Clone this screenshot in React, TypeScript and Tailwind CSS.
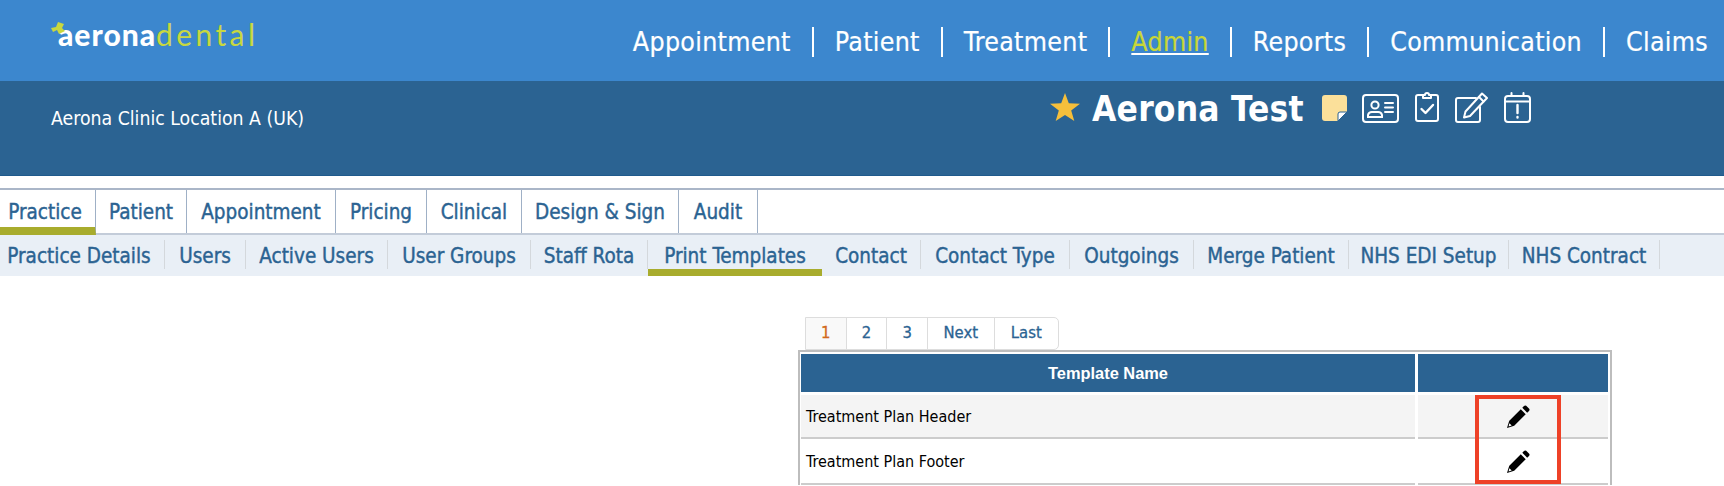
import React from "react";

const navItems = [
  { label: "Appointment", active: false },
  { label: "Patient", active: false },
  { label: "Treatment", active: false },
  { label: "Admin", active: true },
  { label: "Reports", active: false },
  { label: "Communication", active: false },
  { label: "Claims", active: false },
];

const mainTabs = [
  { label: "Practice", width: "w-[96px]" },
  { label: "Patient", width: "w-[91px]" },
  { label: "Appointment", width: "w-[149px]" },
  { label: "Pricing", width: "w-[91px]" },
  { label: "Clinical", width: "w-[95px]" },
  { label: "Design & Sign", width: "w-[157px]" },
  { label: "Audit", width: "w-[79px]" },
];

const subTabs = [
  { label: "Practice Details", width: "w-[165px]" },
  { label: "Users", width: "w-[81px]" },
  { label: "Active Users", width: "w-[142px]" },
  { label: "User Groups", width: "w-[143px]" },
  { label: "Staff Rota", width: "w-[117px]" },
  { label: "Print Templates", width: "w-[174px]" },
  { label: "Contact", width: "w-[99px]" },
  { label: "Contact Type", width: "w-[149px]" },
  { label: "Outgoings", width: "w-[124px]" },
  { label: "Merge Patient", width: "w-[155px]" },
  { label: "NHS EDI Setup", width: "w-[160px]" },
  { label: "NHS Contract", width: "w-[151px]" },
];

const pages = [
  { label: "1", width: "w-[41px]" },
  { label: "2", width: "w-[41px]" },
  { label: "3", width: "w-[41px]" },
  { label: "Next", width: "w-[67px]" },
  { label: "Last", width: "w-[64px]" },
];

const Logo = () => (
  <div className="relative flex h-[25px] items-end pl-[7px] text-[30px] leading-[25px] font-['Lato',sans-serif]">
    <svg className="absolute left-0 top-0" width="14" height="13" viewBox="0 0 14 13">
      <path d="M0 6 L5 5 L7 0 L13 2 L11 6 L14 9 L8 12 L6 8 L2 10 Z" fill="#c8d83f" />
    </svg>
    <span className="font-black tracking-[1px] text-white">aerona</span>
    <span className="font-normal tracking-[3.4px] text-[#c8d83f]">dental</span>
  </div>
);

const Star = () => (
  <svg width="30" height="28" viewBox="0 0 30 28">
    <path d="M15 0 L18.8 10.3 L30 10.7 L21.2 17.5 L24.3 28 L15 21.9 L5.7 28 L8.8 17.5 L0 10.7 L11.2 10.3 Z" fill="#f6bf3b" />
  </svg>
);

const Note = () => (
  <svg width="25" height="26" viewBox="0 0 25 26">
    <path d="M3 0 H22 A3 3 0 0 1 25 3 V17 L16 26 H3 A3 3 0 0 1 0 23 V3 A3 3 0 0 1 3 0 Z" fill="#fbe09a" />
    <path d="M25 17 H18 A2 2 0 0 0 16 19 V26 Z" fill="#fff" stroke="#2b6392" strokeWidth="1" />
  </svg>
);

const IdCard = () => (
  <svg width="37" height="29" viewBox="0 0 37 29" fill="none" stroke="#fff" strokeWidth="2" strokeLinecap="round">
    <rect x="1" y="1" width="35" height="27" rx="3" />
    <circle cx="13" cy="11" r="3.6" />
    <path d="M6 23 V21 A4 4 0 0 1 10 18 H16 A4 4 0 0 1 20 21 V23 Z" />
    <path d="M23 9 H31 M23 13.500 H31 M23 18 H31" />
  </svg>
);

const ClipboardCheck = () => (
  <svg width="24" height="32" viewBox="0 0 24 32" fill="none" stroke="#fff" strokeWidth="2" strokeLinecap="round" strokeLinejoin="round">
    <rect x="1" y="5" width="22" height="26" rx="2" />
    <path d="M8 8 V5 H10 A2 2 0 0 1 14 5 H16 V8 Z" fill="#2b6392" />
    <path d="M6.500 19 L10.500 23 L18 15" strokeWidth="2.400" />
  </svg>
);

const EditNote = () => (
  <svg width="33" height="31" viewBox="0 0 33 31" fill="none" stroke="#fff" strokeWidth="2" strokeLinecap="round" strokeLinejoin="round">
    <path d="M21 6 H3 A2 2 0 0 0 1 8 V28 A2 2 0 0 0 3 30 H23 A2 2 0 0 0 25 28 V15" />
    <path d="M27 1.500 L32 6 L15 24 L9 25.500 L10.500 19.500 Z" />
    <path d="M24 5 L28.500 9.500" />
  </svg>
);

const CalendarAlert = () => (
  <svg width="27" height="31" viewBox="0 0 27 31" fill="none" stroke="#fff" strokeWidth="2" strokeLinecap="round">
    <rect x="1" y="4" width="25" height="26" rx="3" />
    <path d="M1 9.500 H26 M7.500 1 V4 M19.500 1 V4" />
    <path d="M13.500 13 V21 M13.500 25 V25.600" strokeWidth="2.400" />
  </svg>
);

const Pencil = () => (
  <svg width="23" height="23" viewBox="0 0 23 23">
    <path d="M15.300 2.800 L17 1 Q18 0 19.200 0.800 L22.200 3.800 Q23 5 22 6 L20.200 7.700 Z" fill="#000" />
    <path d="M13.800 4.300 L18.700 9.200 L7.200 20.700 L0 23 L2.300 15.800 Z" fill="#000" />
    <path d="M2.400 18.300 L4.700 20.600 L1.600 21.400 Z" fill="#fff" />
  </svg>
);

export default function App() {
  return (
    <div className="h-[486px] w-[1724px] overflow-hidden bg-white font-['DejaVu_Sans_Condensed','DejaVu_Sans',sans-serif]">
      <header className="flex h-[81px] justify-between bg-[#3c87ce] pl-[51px]">
        <div className="pt-[22px]">
          <Logo />
        </div>
        <nav className="-mr-[5px] flex items-start pt-[27px]">
          {navItems.map((item, i) => (
            <a
              key={item.label}
              className={
                "flex h-[30px] items-center px-[21px] text-[26.5px] leading-none tracking-[0.3px] [-webkit-text-stroke:0.2px] " +
                (i < navItems.length - 1 ? "border-r-2 border-white " : "") +
                (item.active ? "text-[#c9d636] underline decoration-white" : "text-white")
              }
            >
              {item.label}
            </a>
          ))}
        </nav>
      </header>

      <section className="relative flex h-[95px] border-b border-[#1f5a8c] bg-[#2b6392] pl-[51px]">
        <div className="pt-[27px] text-[19.3px] leading-[22px] text-white">Aerona Clinic Location A (UK)</div>
        <div className="absolute left-[1050px] top-[9px] flex items-start">
          <div className="mt-[3px]">
            <Star />
          </div>
          <h1 className="-mt-[1px] ml-[12px] text-[35px] leading-[40px] font-bold tracking-[0.2px] text-white">Aerona Test</h1>
          <div className="ml-[18px] flex items-start">
            <div className="mt-[5px]">
              <Note />
            </div>
            <div className="ml-[15px] mt-[4px]">
              <IdCard />
            </div>
            <div className="ml-[16px]">
              <ClipboardCheck />
            </div>
            <div className="ml-[16px] mt-[2px]">
              <EditNote />
            </div>
            <div className="ml-[16px] mt-[2px]">
              <CalendarAlert />
            </div>
          </div>
        </div>
      </section>

      <nav className="mt-[12px] flex h-[47px] border-y-2 border-t-[#aab6c8] border-b-[#c3ccd9]">
        {mainTabs.map((tab, i) => (
          <a
            key={tab.label}
            className={
              "relative flex items-center justify-center border-r border-[#9fb0c6] pt-[2px] text-[20.5px] text-[#2b6392] [-webkit-text-stroke:0.4px_#2b6392] " +
              tab.width +
              (i === 0 ? " -mb-[2px] border-b-[8px] border-b-[#a8ac2d] pt-[8px] pr-[5px]" : "")
            }
          >
            {tab.label}
          </a>
        ))}
      </nav>

      <nav className="flex h-[41px] items-start bg-[#e9eff6] pt-[5px]">
        {subTabs.map((tab, i) => (
          <a
            key={tab.label}
            className={
              "flex items-center justify-center pt-[3px] text-[20.5px] text-[#2b6392] [-webkit-text-stroke:0.4px_#2b6392] " +
              tab.width +
              (tab.label === "Print Templates"
                ? " h-[36px] border-b-[7px] border-[#a8ac2d]"
                : " h-[29px] border-r border-[#d4d8dc]") +
              (i === 0 ? " pr-[6px]" : "")
            }
          >
            {tab.label}
          </a>
        ))}
      </nav>

      <main className="relative pl-[798px] pt-[41px]">
        <div className="ml-[7px] flex h-[33px] w-[254px] overflow-hidden rounded-tr-[5px] rounded-br-[5px] border border-[#dddddd] text-[16.5px] [-webkit-text-stroke:0.3px]">
          {pages.map((p, i) => (
            <a
              key={p.label}
              className={
                "flex items-center justify-center border-r border-[#dddddd] last:border-r-0 " +
                p.width +
                (i === 0 ? " bg-[#f9f9f9] text-[#d2691e]" : " text-[#2b6392]")
              }
            >
              {p.label}
            </a>
          ))}
        </div>

        <div className="w-[814px] border-x-2 border-t-2 border-[#bdbdbd] px-[1px] pt-[2px]">
          <div className="flex gap-[3px]">
            <div className="flex h-[38px] w-[614px] items-center justify-center bg-[#2b6392] font-['Liberation_Sans',sans-serif] text-[16.4px] font-bold text-white">
              Template Name
            </div>
            <div className="h-[38px] w-[190px] bg-[#2b6392]" />
          </div>
          <div className="mt-[3px] flex gap-[3px]">
            <div className="flex h-[44px] w-[614px] items-center border-b-2 border-[#cccccc] bg-[#f4f4f4] pl-[5px] pt-[1px] text-[16px] text-black">
              Treatment Plan Header
            </div>
            <div className="flex h-[44px] w-[190px] items-center justify-center border-b-2 border-[#cccccc] bg-[#f4f4f4] pl-[11px]">
              <Pencil />
            </div>
          </div>
          <div className="flex gap-[3px]">
            <div className="flex h-[46px] w-[614px] items-center border-b-2 border-[#cccccc] pl-[5px] pt-[2px] text-[16px] text-black">
              Treatment Plan Footer
            </div>
            <div className="flex h-[46px] w-[190px] items-center justify-center border-b-2 border-[#cccccc] pl-[11px]">
              <Pencil />
            </div>
          </div>
        </div>

        <div className="absolute left-[1475px] top-[119px] h-[89px] w-[86px] border-4 border-[#ee4127]" />
      </main>
    </div>
  );
}
